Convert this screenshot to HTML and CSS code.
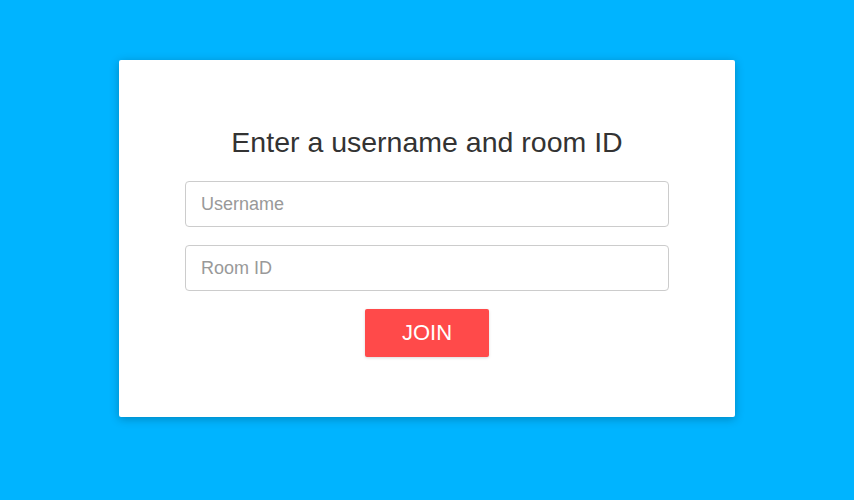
FILE: index.html
```html
<!DOCTYPE html>
<html>
<head>
<meta charset="utf-8">
<link rel="stylesheet" href="styles.css">
</head>
<body>
<main class="page">
  <form class="card">
    <h1 class="title">Enter a username and room ID</h1>
    <input class="field" type="text" placeholder="Username">
    <input class="field" type="text" placeholder="Room ID">
    <button class="join" type="button">JOIN</button>
  </form>
</main>
</body>
</html>
```
FILE: styles.css
```css
html, body {
  margin: 0;
  padding: 0;
  height: 100%;
}
body {
  background: #00b4ff;
  font-family: "Liberation Sans", Arial, sans-serif;
}
.page {
  display: flex;
  justify-content: center;
  padding-top: 60px;
}
.card {
  width: 616px;
  height: 357px;
  box-sizing: border-box;
  background: #fff;
  border-radius: 2px;
  box-shadow: 0 2px 10px rgba(0, 0, 0, 0.25);
  padding: 65px 66px 0;
  display: flex;
  flex-direction: column;
  align-items: center;
}
.title {
  margin: 0 0 22px;
  font-size: 28.5px;
  font-weight: normal;
  line-height: 34px;
  color: #333;
}
.field {
  width: 100%;
  height: 46px;
  box-sizing: border-box;
  border: 1px solid #ccc;
  border-radius: 4px;
  padding: 0 15px;
  font-family: "Liberation Sans", Arial, sans-serif;
  font-size: 18px;
  color: #333;
  margin-bottom: 18px;
  outline: none;
}
.field::placeholder {
  color: #999;
}
.join {
  width: 124px;
  height: 48px;
  border: none;
  border-radius: 2px;
  background: #ff4a4a;
  color: #fff;
  font-family: "Liberation Sans", Arial, sans-serif;
  font-size: 22px;
  box-shadow: 0 1px 3px rgba(0, 0, 0, 0.15);
  cursor: pointer;
}
```
